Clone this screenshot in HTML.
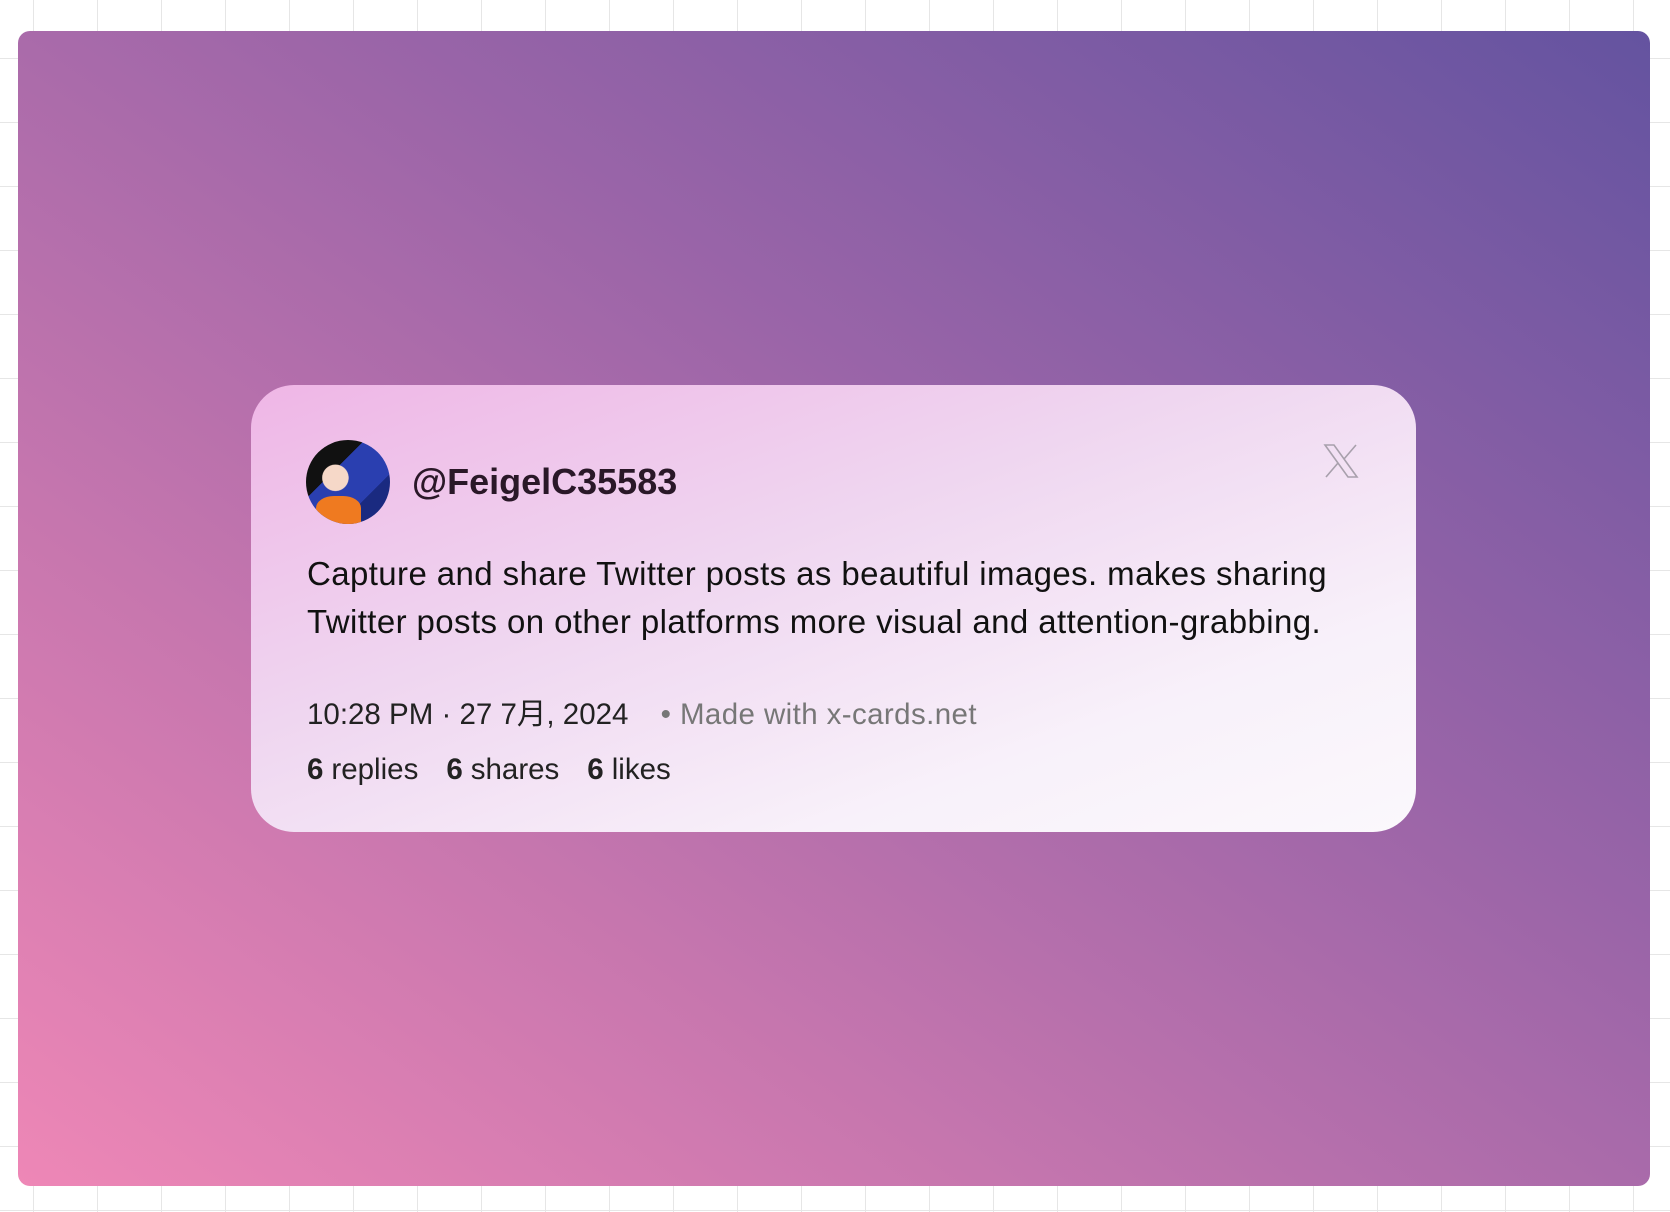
<!DOCTYPE html>
<html><head><meta charset="utf-8"><style>
html,body{margin:0;padding:0;}
body{width:1670px;height:1212px;position:relative;overflow:hidden;background:#fff;
background-image:linear-gradient(#e6e6e6 1px,transparent 1px),linear-gradient(90deg,#e6e6e6 1px,transparent 1px);
background-size:64px 64px;background-position:33px 58px;font-family:"Liberation Sans","Noto Sans CJK SC",sans-serif;}
.outer{position:absolute;left:18px;top:31px;width:1632px;height:1155px;border-radius:12px;
background:linear-gradient(to top right,#ee87b6 0%,#c676ae 30%,#9b65a8 60%,#6453a0 100%);}
.card{position:absolute;left:251px;top:385px;width:1165px;height:447px;border-radius:43px;
background:linear-gradient(160deg,#efb6e6 0%,#efd6f0 40%,#f8f1fa 75%,#fbf8fc 100%);}
.av{position:absolute;left:306px;top:440px;width:84px;height:84px;border-radius:50%;overflow:hidden;
background:radial-gradient(circle at 35% 45%,#f6d8c8 0 18%,transparent 19%),linear-gradient(135deg,#111 0 35%,#2a3fb0 35% 70%,#1a2a80 70%);}
.av:after{content:"";position:absolute;left:10px;top:56px;width:45px;height:30px;background:#ef7a20;border-radius:40% 40% 0 0;}
.name{position:absolute;left:412px;top:461px;font-size:36px;font-weight:bold;color:#2a1828;}
.body{position:absolute;left:307px;top:550px;font-size:33px;line-height:48px;color:#111;width:1060px;letter-spacing:0.4px;}
.meta{position:absolute;left:307px;top:691px;font-size:29.5px;color:#222;}
.meta span{color:#777;margin-left:24px;letter-spacing:0.4px}
.stats{position:absolute;left:307px;top:753px;font-size:29.5px;color:#222;}
.stats b{font-weight:bold;margin-right:8px}
.stats i{font-style:normal;margin-right:28px}
</style></head><body>
<div class="outer"></div>
<div class="card"></div>
<div class="av"></div>
<div class="name">@FeigelC35583</div>
<svg style="position:absolute;left:1323px;top:443px" width="36" height="36" viewBox="0 0 36 36"><path d="M2 2h9l23 32h-9z" fill="none" stroke="#a8a0ac" stroke-width="1.6"/><path d="M33 2L21 16M3 34l12-14" stroke="#a8a0ac" stroke-width="1.6"/></svg>
<div class="body">Capture and share Twitter posts as beautiful images. makes sharing<br>Twitter posts on other platforms more visual and attention-grabbing.</div>
<div class="meta">10:28 PM · 27 7月, 2024 <span>• Made with x-cards.net</span></div>
<div class="stats"><b>6</b><i>replies</i><b>6</b><i>shares</i><b>6</b><i>likes</i></div>
</body></html>
